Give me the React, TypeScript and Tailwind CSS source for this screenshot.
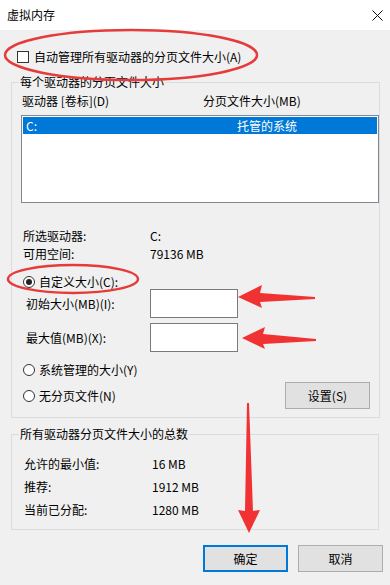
import React from "react";

const font = { fontFamily: '"Noto Sans CJK SC", "Noto Sans", sans-serif' };

const Radio = ({ checked = false, label }: { checked?: boolean; label: string }) => (
  <div className="flex items-center h-[16px]">
    <span className="w-[12px] h-[12px] rounded-full border border-[#333] bg-white flex items-center justify-center">
      {checked && <span className="w-[6px] h-[6px] rounded-full bg-[#222]" />}
    </span>
    <span className="ml-[4px]">{label}</span>
  </div>
);

const Overlay = () => (
  <svg className="absolute inset-0 pointer-events-none" width={390} height={585} viewBox="0 0 390 585">
    <ellipse cx={131} cy={55} rx={126} ry={25} fill="none" stroke="#e63b3b" strokeWidth={2.5} />
    <ellipse cx={73} cy={279} rx={65} ry={14} fill="none" stroke="#e63b3b" strokeWidth={2.5} />
    <polygon points="238,297 262,285 260,293 315,297 315,299 260,302 262,308" fill="#f03232" />
    <polygon points="242,338 265,327 263,334 316,339 316,341 263,344 265,349" fill="#f03232" />
    <polygon points="247,403 249,403 253,511 260,510 249,533 238,510 245,511" fill="#f03232" />
  </svg>
);

export default function App() {
  return (
    <div className="relative w-[390px] h-[585px] bg-[#f0f0f0] overflow-hidden text-[12px] leading-[16px] text-black" style={font}>
      <div className="h-[30px] bg-white flex items-center justify-between pl-[7px] pr-[7px]">
        <span>虚拟内存</span>
        <svg width={11} height={11} viewBox="0 0 11 11">
          <path d="M0.5 0.5 L10.5 10.5 M10.5 0.5 L0.5 10.5" stroke="#111" strokeWidth={1} />
        </svg>
      </div>

      <div className="mt-[19px] ml-[17px] flex items-center h-[16px]">
        <span className="w-[12px] h-[12px] border border-[#333] bg-white" />
        <span className="ml-[5px]">自动管理所有驱动器的分页文件大小(A)</span>
      </div>

      <fieldset className="mt-[9px] ml-[11px] w-[368px] border border-[#dcdcdc] pb-[8px]">
        <legend className="ml-[7px] px-[1px]">每个驱动器的分页文件大小</legend>
        <div className="mt-[3px] flex pl-[10px]">
          <span className="w-[181px]">驱动器 [卷标](D)</span>
          <span>分页文件大小(MB)</span>
        </div>
        <div className="mt-[6px] ml-[9px] w-[358px] h-[88px] border border-[#828790] bg-white p-[1px]">
          <div className="h-[17px] bg-[#0078d7] text-white flex items-center">
            <span className="pl-[3px] w-[214px]">C:</span>
            <span>托管的系统</span>
          </div>
        </div>

        <div className="mt-[24px] pl-[11px] grid grid-cols-[127px_1fr] leading-[18px]">
          <span>所选驱动器:</span>
          <span>C:</span>
          <span>可用空间:</span>
          <span>79136 MB</span>
        </div>

        <div className="mt-[11px] pl-[11px] h-[15px] flex items-start">
          <Radio checked label="自定义大小(C):" />
        </div>

        <div className="flex flex-col gap-[5px]">
          <div className="flex items-center h-[29px]">
            <span className="w-[138px] pl-[14px]">初始大小(MB)(I):</span>
            <span className="w-[88px] h-[29px] border border-[#7a7a7a] bg-white" />
          </div>
          <div className="flex items-center h-[29px]">
            <span className="w-[138px] pl-[14px]">最大值(MB)(X):</span>
            <span className="w-[88px] h-[29px] border border-[#7a7a7a] bg-white" />
          </div>
        </div>

        <div className="mt-[10px] pl-[11px]">
          <Radio label="系统管理的大小(Y)" />
        </div>
        <div className="mt-[4px] pl-[11px] pr-[9px] flex items-center justify-between h-[27px]">
          <Radio label="无分页文件(N)" />
          <button className="w-[85px] h-[27px] bg-[#e1e1e1] border border-[#adadad]">设置(S)</button>
        </div>
      </fieldset>

      <fieldset className="mt-[8px] ml-[11px] w-[368px] border border-[#dcdcdc] pb-[8px]">
        <legend className="ml-[7px] px-[1px]">所有驱动器分页文件大小的总数</legend>
        <div className="mt-[10px] pl-[12px] grid grid-cols-[128px_1fr] auto-rows-[23px] items-center">
          <span>允许的最小值:</span>
          <span>16 MB</span>
          <span>推荐:</span>
          <span>1912 MB</span>
          <span>当前已分配:</span>
          <span>1280 MB</span>
        </div>
      </fieldset>

      <div className="mt-[15px] pr-[7px] flex justify-end gap-[10px]">
        <button className="w-[85px] h-[27px] bg-[#e1e1e1] border-2 border-[#0078d7]">确定</button>
        <button className="w-[85px] h-[27px] bg-[#e1e1e1] border border-[#adadad]">取消</button>
      </div>

      <Overlay />
    </div>
  );
}
